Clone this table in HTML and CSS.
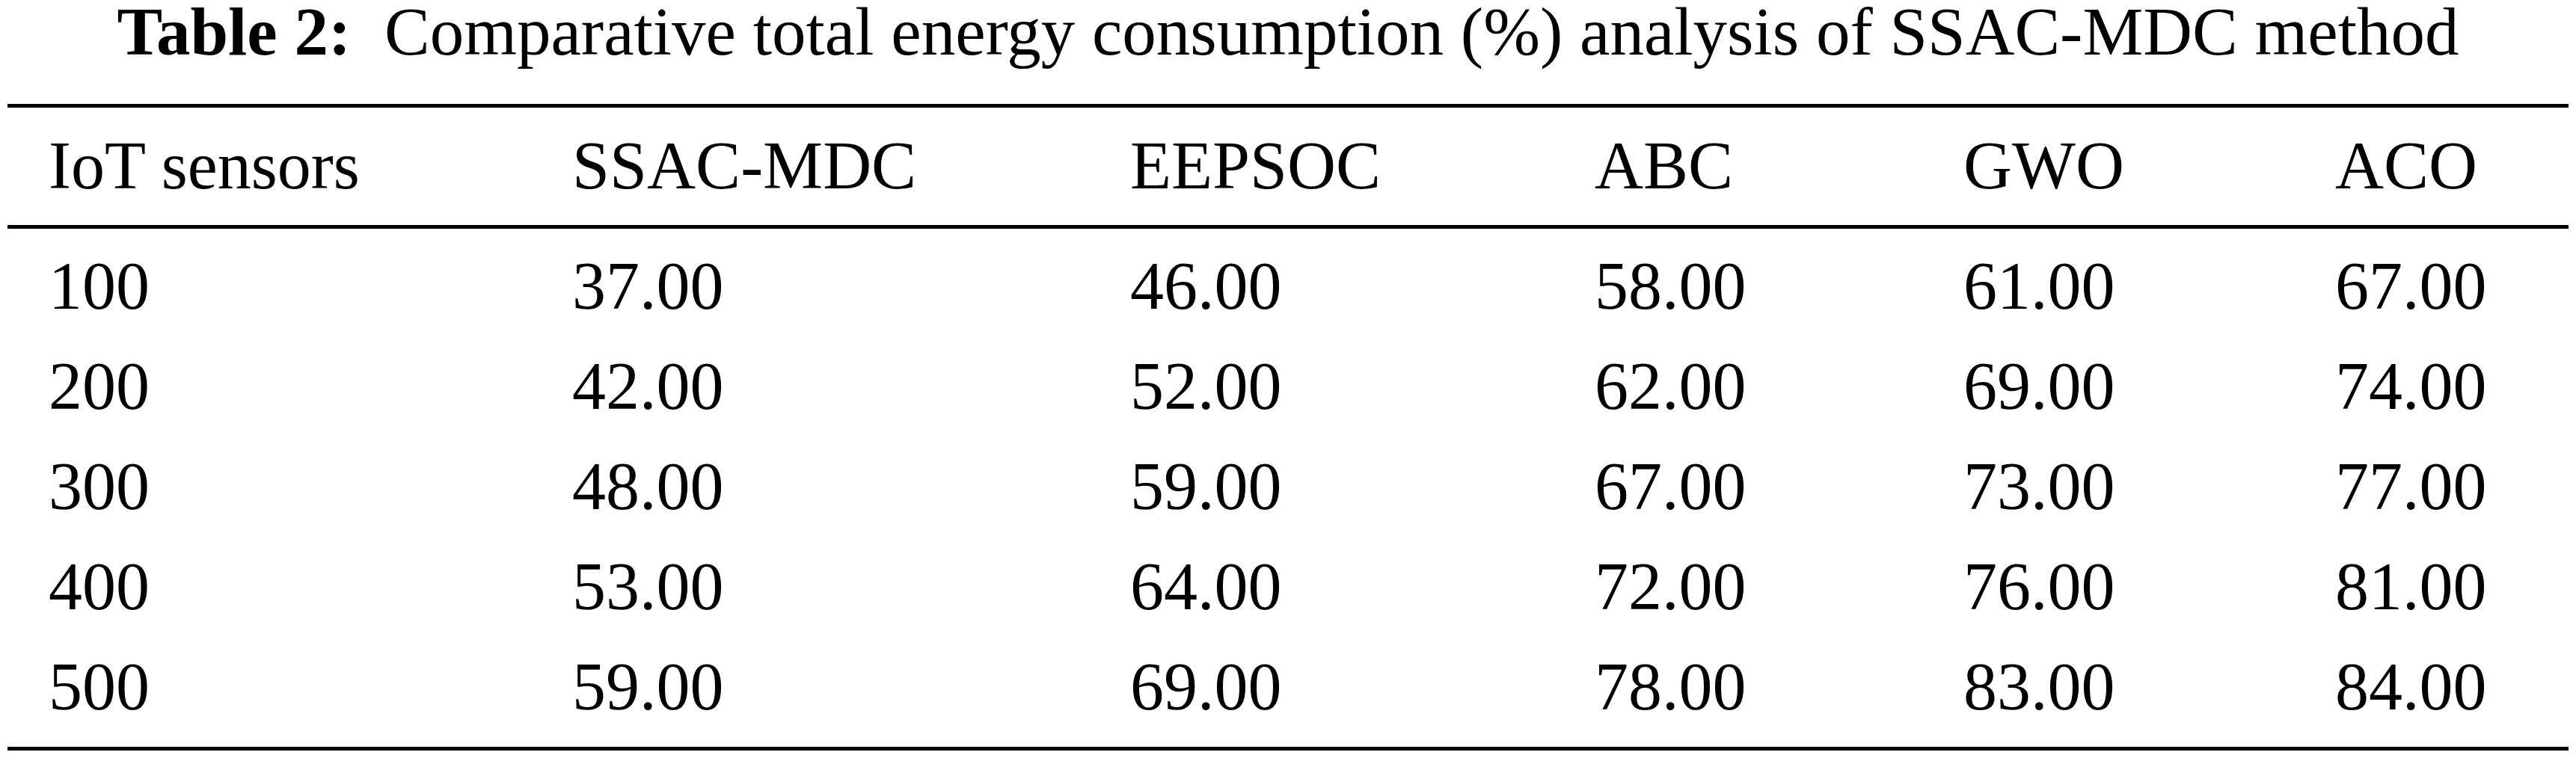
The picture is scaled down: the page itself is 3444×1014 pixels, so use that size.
FILE: index.html
```html
<!DOCTYPE html>
<html lang="en">
<head>
<meta charset="utf-8">
<title>Table 2</title>
<link rel="stylesheet" href="styles.css">
</head>
<body>
<div class="caption"><b class="label">Table 2:</b> Comparative total energy consumption (%) analysis of SSAC-MDC method</div>
<div class="table">
  <div class="row head">
    <div class="cell">IoT sensors</div>
    <div class="cell">SSAC-MDC</div>
    <div class="cell">EEPSOC</div>
    <div class="cell">ABC</div>
    <div class="cell">GWO</div>
    <div class="cell">ACO</div>
  </div>
  <div class="body">
    <div class="row">
      <div class="cell">100</div><div class="cell">37.00</div><div class="cell">46.00</div><div class="cell">58.00</div><div class="cell">61.00</div><div class="cell">67.00</div>
    </div>
    <div class="row">
      <div class="cell">200</div><div class="cell">42.00</div><div class="cell">52.00</div><div class="cell">62.00</div><div class="cell">69.00</div><div class="cell">74.00</div>
    </div>
    <div class="row">
      <div class="cell">300</div><div class="cell">48.00</div><div class="cell">59.00</div><div class="cell">67.00</div><div class="cell">73.00</div><div class="cell">77.00</div>
    </div>
    <div class="row">
      <div class="cell">400</div><div class="cell">53.00</div><div class="cell">64.00</div><div class="cell">72.00</div><div class="cell">76.00</div><div class="cell">81.00</div>
    </div>
    <div class="row">
      <div class="cell">500</div><div class="cell">59.00</div><div class="cell">69.00</div><div class="cell">78.00</div><div class="cell">83.00</div><div class="cell">84.00</div>
    </div>
  </div>
</div>
</body>
</html>
```
FILE: styles.css
```css
html, body {
  background: #fff;
}
body {
  margin: 0;
  padding: 3px 10px 0;
  font-family: "Liberation Serif", "Times New Roman", serif;
  color: #000;
}
.caption {
  font-size: 91px;
  line-height: 80px;
  text-align: center;
  margin-bottom: 56px;
  white-space: nowrap;
}
.label {
  font-weight: bold;
  margin-right: 22px;
}
.table {
  border-top: 5px solid #000;
  border-bottom: 5px solid #000;
  font-size: 90px;
  line-height: 134px;
}
.head {
  padding-top: 11px;
  padding-bottom: 12px;
  border-bottom: 5px solid #000;
}
.body {
  padding-top: 10px;
  padding-bottom: 13px;
}
.row {
  display: grid;
  grid-template-columns: 700px 746px 621px 493px 497px 1fr;
  padding-left: 55px;
}
.cell {
  white-space: nowrap;
}
```
